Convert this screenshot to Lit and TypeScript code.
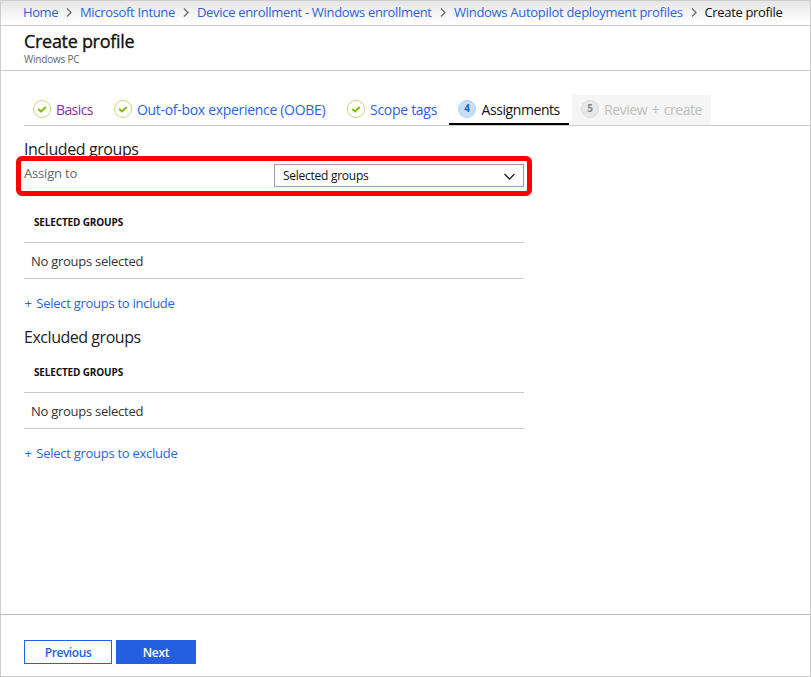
import { LitElement, html, css, svg } from "lit";
import { customElement, property } from "lit/decorators.js";

type StepState = "done" | "active" | "disabled";

interface Step {
  id: string;
  label: string;
  state: StepState;
}

const crumbs = [
  { id: "home", label: "Home" },
  { id: "intune", label: "Microsoft Intune" },
  { id: "enroll", label: "Device enrollment - Windows enrollment" },
  { id: "autopilot", label: "Windows Autopilot deployment profiles" },
  { id: "current", label: "Create profile" },
];

const steps: Step[] = [
  { id: "basics", label: "Basics", state: "done" },
  { id: "oobe", label: "Out-of-box experience (OOBE)", state: "done" },
  { id: "scope", label: "Scope tags", state: "done" },
  { id: "assign", label: "Assignments", state: "active" },
  { id: "review", label: "Review + create", state: "disabled" },
];

const check = svg`<path d="M5.2 9 L8 11.4 L12.8 7" fill="none" stroke="#7fba00" stroke-width="2"/>`;

@customElement("group-table")
export class GroupTable extends LitElement {
  @property() action = "";

  static styles = css`
    :host { display: block; width: 500px; }
    .head {
      height: 40px;
      line-height: 40px;
      padding-left: 10px;
      font-size: 10px;
      font-weight: 700;
      letter-spacing: -0.15px;
      color: #111;
      border-bottom: 1px solid #c8c8c8;
    }
    .row {
      height: 35px;
      line-height: 36px;
      padding-left: 7px;
      font-size: 13px;
      letter-spacing: -0.26px;
      color: #333;
      border-bottom: 1px solid #c8c8c8;
    }
    .action {
      display: block;
      height: 20px;
      line-height: 20px;
      margin-top: 14px;
      padding-left: 0.5px;
      font-size: 13px;
      letter-spacing: -0.27px;
      color: #2b63e0;
    }
    .plus { margin-right: 1.5px; }
  `;

  render() {
    return html`
      <div class="head">SELECTED GROUPS</div>
      <div class="row">No groups selected</div>
      <a class="action"><span class="plus">+</span> ${this.action}</a>
    `;
  }
}

@customElement("app-root")
export class AppRoot extends LitElement {
  static styles = css`
    :host {
      display: flex;
      flex-direction: column;
      box-sizing: border-box;
      width: 811px;
      height: 677px;
      border: 1px solid #ccc;
      background: #fff;
      color: #111;
      font-family: "Open Sans", "Noto Sans", sans-serif;
      overflow: hidden;
      white-space: nowrap;
    }
    .crumbs {
      display: flex;
      height: 24px;
      line-height: 22px;
      padding-left: 22px;
      font-size: 13px;
      border-bottom: 1px solid #ccc;
      background: linear-gradient(#e6e6e6, #fff 90%);
    }
    .crumb { color: #2b63e0; }
    .crumb.home { width: 35px; letter-spacing: -0.4px; }
    .crumb.intune { width: 95px; letter-spacing: -0.33px; }
    .crumb.enroll { width: 235px; letter-spacing: -0.32px; }
    .crumb.autopilot { width: 228.5px; letter-spacing: -0.29px; }
    .crumb.current { width: 78px; letter-spacing: -0.34px; color: #111; }
    .sep { width: 22px; height: 22px; flex: none; }
    .title {
      height: 44px;
      padding-left: 23px;
      border-bottom: 1px solid #ccc;
    }
    h1 {
      margin: 0;
      padding-top: 3px;
      height: 25px;
      line-height: 25px;
      font-size: 18px;
      font-weight: 400;
      letter-spacing: -0.3px;
      -webkit-text-stroke: 0.35px #111;
    }
    .sub {
      height: 10px;
      line-height: 10px;
      font-size: 10px;
      letter-spacing: -0.22px;
      margin-top: -0.5px;
      color: #666;
    }
    .steps {
      display: flex;
      height: 30px;
      margin: 24px 0 0 23px;
      border-bottom: 1px solid #ccc;
    }
    .step {
      display: flex;
      box-sizing: border-box;
      height: 30px;
      padding: 5px 0 0 9px;
      font-size: 14px;
      color: #2b63e0;
    }
    .step svg { width: 18px; height: 18px; margin-right: 5px; flex: none; }
    .label { line-height: 20px; }
    .step.basics { width: 81px; color: #8a2da5; letter-spacing: -0.6px; }
    .step.oobe { width: 233px; letter-spacing: -0.31px; }
    .step.scope { width: 111px; letter-spacing: -0.29px; }
    .step.assign { width: 120px; margin-right: 3px; letter-spacing: -0.42px; color: #111; border-bottom: 2px solid #000; }
    .step.assign .label { margin-left: 0.5px; }
    .step.review { width: 139px; letter-spacing: -0.42px; word-spacing: 1.2px; color: #bdbdbd; background: #f5f5f5; }
    .num { font: 700 10px "Open Sans", sans-serif; letter-spacing: 0; text-anchor: middle; }
    main { flex: 1; padding-left: 23px; }
    h2 {
      margin: 0;
      height: 22px;
      line-height: 22px;
      font-size: 16px;
      font-weight: 400;
      color: #222;
    }
    .included { margin-top: 12px; letter-spacing: -0.4px; }
    .excluded { margin: 13px 0 4px; letter-spacing: -0.46px; }
    .assign-row {
      display: flex;
      box-sizing: border-box;
      width: 516px;
      height: 40px;
      margin: -4px 0 6px -8px;
      border: 5px solid #f00;
      border-radius: 6px;
      padding: 3px 3px 0;
      position: relative;
    }
    .assign-row label {
      width: 250px;
      line-height: 18px;
      font-size: 13px;
      letter-spacing: -0.18px;
      color: #666;
    }
    .select {
      display: flex;
      justify-content: space-between;
      box-sizing: border-box;
      width: 250px;
      height: 23px;
      line-height: 21px;
      border: 1px solid #a0a0a0;
      padding: 0 7px 0 8px;
      font-size: 12px;
      letter-spacing: -0.26px;
      background: #fff;
    }
    .select svg { width: 13px; height: 21px; }
    footer {
      display: flex;
      gap: 4px;
      height: 36px;
      padding: 25px 0 0 23px;
      border-top: 1px solid #bbb;
    }
    button {
      box-sizing: border-box;
      height: 24px;
      padding: 1px 0 0;
      border: 1px solid #235fe0;
      font: 600 12px/21px "Open Sans", sans-serif;
    }
    .prev { width: 88px; color: #235fe0; background: #fff; letter-spacing: -0.42px; }
    .next { width: 80px; color: #fff; background: #235fe0; letter-spacing: -0.3px; }
  `;

  private badge(step: Step, n: number) {
    const look = {
      done: { fill: "#fff", stroke: "#c0dc80", ink: "" },
      active: { fill: "#c7dff5", stroke: "#b5d0f5", ink: "#1766c0" },
      disabled: { fill: "#e8e8e8", stroke: "#dcdcdc", ink: "#8a8a8a" },
    }[step.state];
    return html`<svg viewBox="0 0 18 18">
      <circle cx="9" cy="9" r="8.5" fill=${look.fill} stroke=${look.stroke}></circle>
      ${step.state === "done" ? check : svg`<text class="num" x="9" y="12" fill=${look.ink}>${n}</text>`}
    </svg>`;
  }

  render() {
    return html`
      <nav class="crumbs">
        ${crumbs.map(
          (c, i) => html`${i
              ? html`<svg class="sep" viewBox="0 0 22 22">
                  <path d="M9 7.5 L13 11.5 L9 15.5" fill="none" stroke="#666" stroke-width="1.2"></path>
                </svg>`
              : ""}<span class="crumb ${c.id}">${c.label}</span>`
        )}
      </nav>
      <header class="title">
        <h1>Create profile</h1>
        <div class="sub">Windows PC</div>
      </header>
      <div class="steps">
        ${steps.map(
          (s, i) => html`<div class="step ${s.id}">${this.badge(s, i + 1)}<span class="label">${s.label}</span></div>`
        )}
      </div>
      <main>
        <h2 class="included">Included groups</h2>
        <div class="assign-row">
          <label>Assign to</label>
          <div class="select">
            <span>Selected groups</span>
            <svg viewBox="0 0 13 21">
              <path d="M1.5 9 L6.5 14 L11.5 9" fill="none" stroke="#222" stroke-width="1.3"></path>
            </svg>
          </div>
        </div>
        <group-table action="Select groups to include"></group-table>
        <h2 class="excluded">Excluded groups</h2>
        <group-table action="Select groups to exclude"></group-table>
      </main>
      <footer>
        <button class="prev">Previous</button>
        <button class="next">Next</button>
      </footer>
    `;
  }
}
